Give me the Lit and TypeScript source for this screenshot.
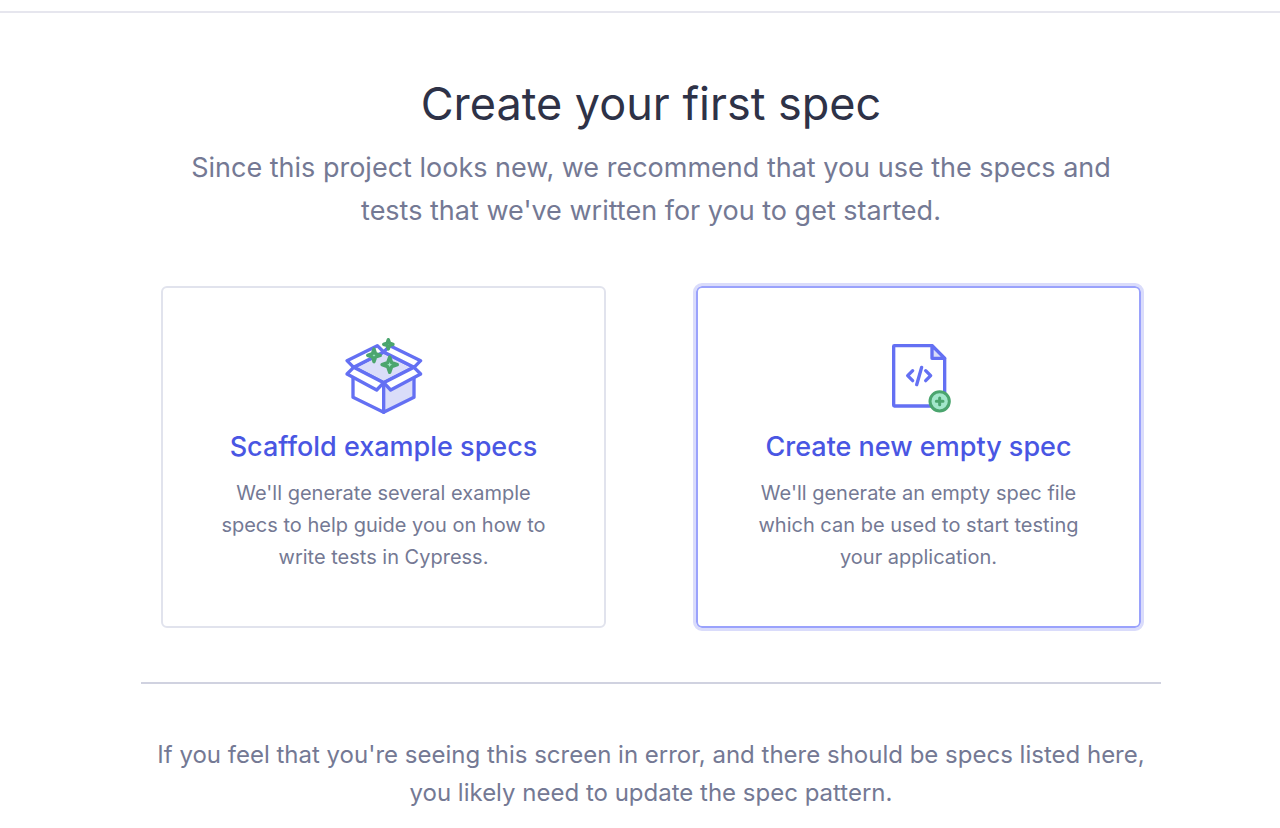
import { LitElement, html, css, svg } from "lit";
import { customElement, property } from "lit/decorators.js";

const sparkle = (x: number, y: number, r: number) => {
  const k = r * 0.26;
  return svg`<path fill="#A3E7CB" stroke="#4BA56E" stroke-width="10" stroke-linejoin="round"
    d="M${x} ${y - r}L${x + k} ${y - k}L${x + r} ${y}L${x + k} ${y + k}L${x} ${y + r}L${x - k} ${y + k}L${x - r} ${y}L${x - k} ${y - k}Z"/>`;
};

const boxIcon = html`
  <svg class="icon" viewBox="0 0 300 270" aria-hidden="true">
    <g stroke="#6470F3" stroke-width="10" stroke-linejoin="round" stroke-linecap="round" fill="none">
      <path fill="#fff" d="M57 110V202L149 247V158Z" />
      <path fill="#DADDF9" d="M149 158V247L240 202V110Z" />
      <path fill="#DADDF9" d="M59 112L149 66L240 112L149 158Z" />
      <path fill="#fff" d="M39 92L130 47L149 66L59 112Z" />
      <path fill="#fff" d="M149 66L168 47L260 92L240 112Z" />
      <path fill="#fff" d="M59 112L39 132L128 180L149 158Z" />
      <path fill="#fff" d="M240 112L260 132L170 180L149 158Z" />
    </g>
    ${sparkle(163, 43, 14)}${sparkle(120, 76, 19)}${sparkle(167, 104, 23)}
  </svg>`;

const fileIcon = html`
  <svg class="icon" viewBox="-34 -15 300 270" aria-hidden="true">
    <g stroke="#6470F3" stroke-width="10" stroke-linejoin="round" stroke-linecap="round" fill="none">
      <path fill="#fff" d="M42 32H155L193 70V213H42Q40 213 40 211V34Q40 32 42 32Z" />
      <path fill="#DADDF9" d="M155 32V70H193Z" />
      <path d="M97 107L82 122L97 137M136 107L151 122L136 137M124 97L109 149" />
    </g>
    <circle cx="178" cy="199" r="29" fill="#A3E7CB" stroke="#4BA56E" stroke-width="9" />
    <path d="M178 189V209M168 199H188" stroke="#4BA56E" stroke-width="9" stroke-linecap="round" />
  </svg>`;

@customElement("spec-card")
export class SpecCard extends LitElement {
  @property() heading = "";
  @property() description = "";
  @property({ attribute: false }) icon: unknown = null;
  @property({ type: Boolean }) active = false;

  static styles = css`
    :host { display: flex; flex: 1; min-width: 0; }
    .card {
      box-sizing: border-box;
      flex: 1;
      min-width: 0;
      padding: 42px 48px 53px;
      border: 2px solid #e1e3ed;
      border-radius: 6px;
      background: #fff;
      font: inherit;
      text-align: center;
      cursor: pointer;
    }
    .active {
      border-color: #9aa2fc;
      outline: 3px solid #dadcfb;
      outline-offset: 0;
    }
    .icon { display: block; width: 100px; height: 90px; margin: 0 auto; }
    .title {
      display: block;
      margin: 7px 0 10px;
      color: #4956e3;
      font-size: 27px;
      font-weight: 500;
      line-height: 40px;
    }
    .text { display: block; color: #747994; font-size: 20px; line-height: 32px; }
  `;

  render() {
    return html`<button class="card ${this.active ? "active" : ""}" type="button">
      ${this.icon}
      <span class="title">${this.heading}</span>
      <span class="text">${this.description}</span>
    </button>`;
  }
}

@customElement("app-root")
export class AppRoot extends LitElement {
  static styles = css`
    :host {
      display: block;
      color: #747994;
      background: #fff;
      font-family: Inter, "Liberation Sans", sans-serif;
      font-variant-ligatures: none;
    }
    .topbar { height: 11px; border-bottom: 2px solid #e6e6ee; }
    .page {
      max-width: 1020px;
      margin: 0 auto;
      padding: 59px 0 16px 22px;
      text-align: center;
    }
    .title { margin: 0; color: #2e3247; font-size: 45px; font-weight: 400; line-height: 64px; }
    .lead { margin: 10px 40px 0; font-size: 27px; line-height: 43px; }
    .cards { display: flex; gap: 90px; margin: 54px 20px; }
    .note {
      margin: 0;
      padding-top: 52px;
      border-top: 2px solid #d0d2e0;
      font-size: 24px;
      line-height: 38px;
    }
  `;

  render() {
    return html`
      <header class="topbar"></header>
      <main class="page">
        <h1 class="title">Create your first spec</h1>
        <p class="lead">
          Since this project looks new, we recommend that you use the specs and
          tests that we've written for you to get started.
        </p>
        <div class="cards">
          <spec-card
            heading="Scaffold example specs"
            description="We'll generate several example specs to help guide you on how to write tests in Cypress."
            .icon=${boxIcon}
          ></spec-card>
          <spec-card
            active
            heading="Create new empty spec"
            description="We'll generate an empty spec file which can be used to start testing your application."
            .icon=${fileIcon}
          ></spec-card>
        </div>
        <p class="note">
          If you feel that you're seeing this screen in error, and there should be specs listed here,
          you likely need to update the spec pattern.
        </p>
      </main>
    `;
  }
}
